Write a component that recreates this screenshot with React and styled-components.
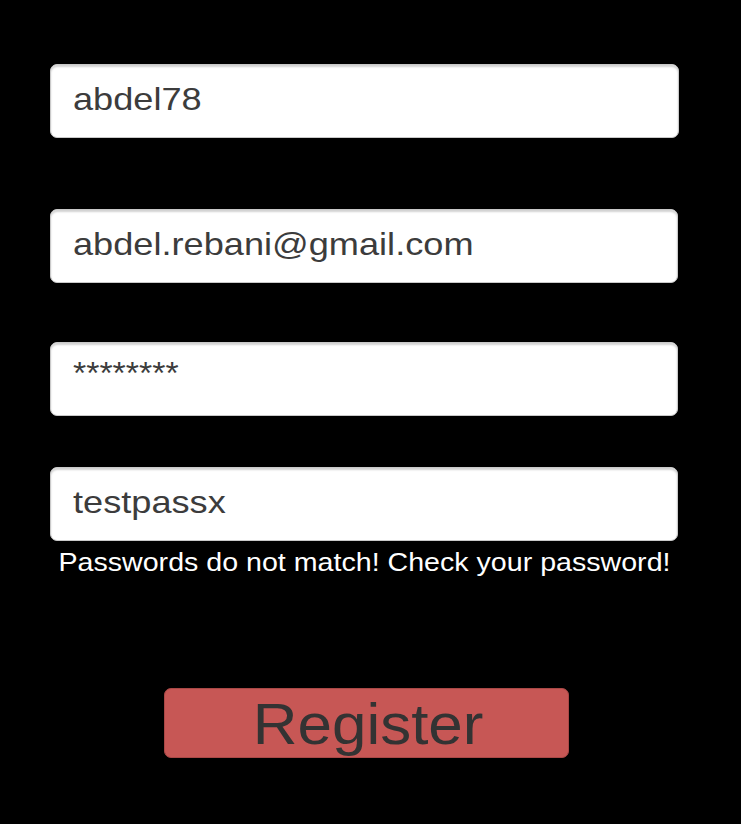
import React from "react";
import styled, { createGlobalStyle } from "styled-components";

const Global = createGlobalStyle`
  html, body { margin: 0; padding: 0; background: #000; }
  body { font-family: "Liberation Sans", Arial, sans-serif; }
`;

const Page = styled.div`
  width: 741px;
  height: 824px;
  background: #000;
  display: flex;
  flex-direction: column;
  padding-left: 50px;
  box-sizing: border-box;
  overflow: hidden;
`;

const Field = styled.div`
  width: ${(p) => p.$w || 628}px;
  height: 74px;
  margin-top: ${(p) => p.$top}px;
  box-sizing: border-box;
  background: #fff;
  border: 1px solid #c9c9c9;
  border-radius: 7px;
  box-shadow: inset 0 2px 2px rgba(0, 0, 0, 0.18);
  display: flex;
  align-items: center;
  padding: 0 0 4px 22px;
  font-size: 32px;
  color: #3c3c3c;
  line-height: 1;
`;

const Value = styled.span`
  display: inline-block;
  transform: scaleX(${(p) => p.$sx || 1.13});
  transform-origin: left center;
  margin-top: ${(p) => p.$dy || 0}px;
  white-space: nowrap;
`;

const ErrorText = styled.div`
  width: 628px;
  margin-top: 6px;
  display: flex;
  justify-content: center;
  color: #fff;
  font-size: 25px;
  line-height: 30px;
  box-sizing: border-box;
`;

const Stretch = styled.span`
  display: inline-block;
  transform: scaleX(${(p) => p.$sx});
  transform-origin: center center;
  white-space: nowrap;
`;

const Button = styled.button`
  align-self: flex-start;
  margin-top: 111px;
  margin-left: 114px;
  width: 405px;
  height: 70px;
  background: #c75755;
  border: 1px solid #a94846;
  border-radius: 7px;
  color: #333;
  font-family: "Liberation Sans", Arial, sans-serif;
  font-size: 57px;
  line-height: 1;
  padding: 2px 0 0 3px;
  display: flex;
  align-items: center;
  justify-content: center;
`;

export default function App() {
  return (
    <>
      <Global />
      <Page>
        <Field $top={64} $w={629}>
          <Value>abdel78</Value>
        </Field>
        <Field $top={71}>
          <Value>abdel.rebani@gmail.com</Value>
        </Field>
        <Field $top={59}>
          <Value $sx={1.06} $dy={-9}>********</Value>
        </Field>
        <Field $top={51}>
          <Value>testpassx</Value>
        </Field>
        <ErrorText>
          <Stretch $sx={1.144}>Passwords do not match! Check your password!</Stretch>
        </ErrorText>
        <Button>
          <Stretch $sx={1.086}>Register</Stretch>
        </Button>
      </Page>
    </>
  );
}
